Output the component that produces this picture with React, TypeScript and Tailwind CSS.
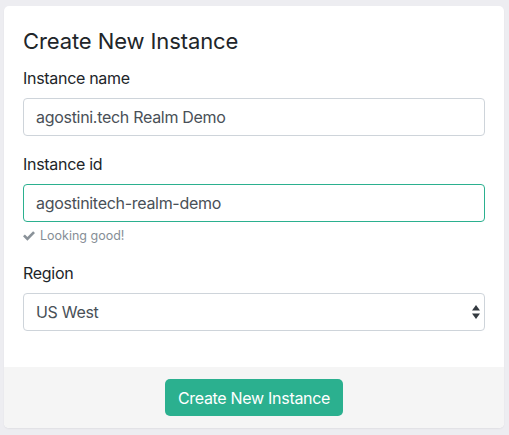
import { useState } from "react";

export default function App() {
  const [name, setName] = useState("agostini.tech Realm Demo");
  const [id, setId] = useState("agostinitech-realm-demo");
  const [region, setRegion] = useState("us-west");

  return (
    <div
      className="min-h-screen bg-[#ededf1] pl-[4px] pr-[5px] pt-[6px] pb-[7px]"
      style={{ fontFamily: "Inter, 'Liberation Sans', sans-serif" }}
    >
      <div className="overflow-hidden rounded-[5px] bg-white shadow-[0_1px_2px_rgba(0,0,0,0.06)]">
        {/* Form body */}
        <div className="px-[19px] pt-[22px] pb-[36px]">
          <h1 className="text-[22px] leading-[26px] font-normal text-[#212529] tracking-[-0.1px]">
            Create New Instance
          </h1>

          <label className="mt-[12px] block text-[16px] leading-[24px] text-[#212529] tracking-[-0.3px]">
            Instance name
          </label>
          <input
            value={name}
            onChange={(e) => setName(e.target.value)}
            className="mt-[8px] block h-[38px] w-full rounded-[4px] border border-[#ced4da] px-[12px] text-[16px] tracking-[-0.3px] text-[#495057] outline-none"
          />

          <label className="mt-[16px] block text-[16px] leading-[24px] text-[#212529] tracking-[-0.3px]">
            Instance id
          </label>
          <input
            value={id}
            onChange={(e) => setId(e.target.value)}
            className="mt-[8px] block h-[38px] w-full rounded-[4px] border border-[#2bb08f] px-[12px] text-[16px] tracking-[-0.3px] text-[#495057] outline-none"
          />
          <div className="mt-[5px] flex items-center gap-[5px] text-[12.5px] leading-[18px] text-[#868e96]">
            <svg width="12" height="10" viewBox="0 0 12 10" fill="#8a9299">
              <path d="M0 5.3 L1.9 3.4 L4.4 5.9 L10.1 0.2 L12 2.1 L4.4 9.7 Z" />
            </svg>
            Looking good!
          </div>

          <label className="mt-[16px] block text-[16px] leading-[24px] text-[#212529] tracking-[-0.3px]">
            Region
          </label>
          <div className="relative mt-[8px]">
            <select
              value={region}
              onChange={(e) => setRegion(e.target.value)}
              className="block h-[38px] w-full appearance-none rounded-[4px] border border-[#ced4da] bg-white px-[12px] text-[16px] tracking-[-0.3px] text-[#495057] outline-none"
            >
              <option value="us-west">US West</option>
              <option value="us-east">US East</option>
              <option value="eu-west">EU West</option>
            </select>
            <svg
              className="pointer-events-none absolute right-[5px] top-[12px]"
              width="8"
              height="14"
              viewBox="0 0 8 14"
              fill="#343a40"
            >
              <path d="M4 0 L8 5.5 L0 5.5 Z" />
              <path d="M0 8.5 L8 8.5 L4 14 Z" />
            </svg>
          </div>
        </div>

        {/* Footer */}
        <div className="flex justify-center bg-[#f5f5f5] py-[12px]">
          <button className="h-[37px] rounded-[5px] bg-[#2bb08f] px-[13px] text-[16px] tracking-[-0.3px] text-white">
            Create New Instance
          </button>
        </div>
      </div>
    </div>
  );
}
